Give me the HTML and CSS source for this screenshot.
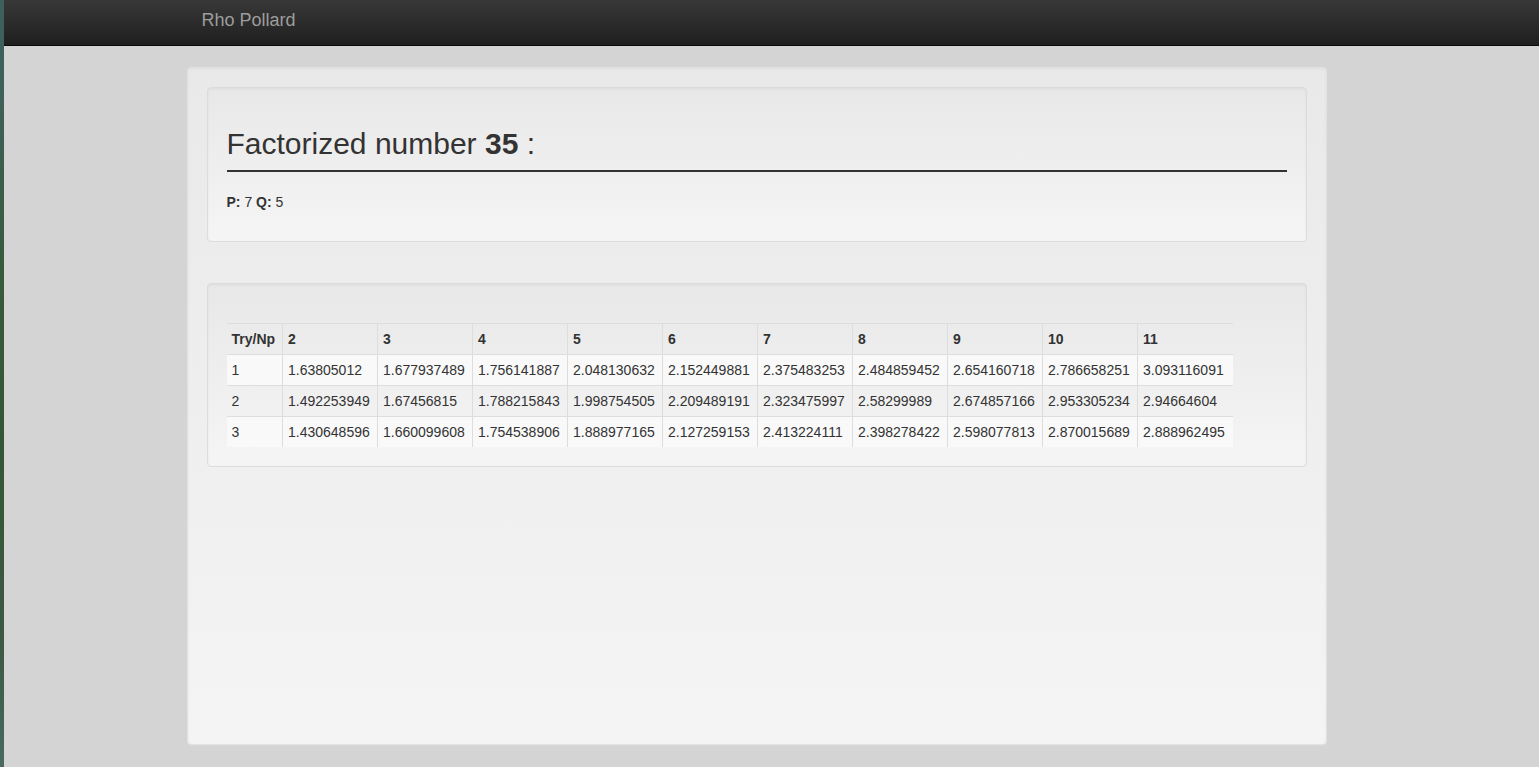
FILE: index.html
```html
<!DOCTYPE html>
<html>
<head>
<meta charset="utf-8">
<title>Rho Pollard</title>
<link rel="stylesheet" href="styles.css">
</head>
<body>
<div class="desk-strip"></div>
<div class="page">
  <nav class="navbar">
    <div class="container">
      <a class="brand" href="#">Rho Pollard</a>
    </div>
  </nav>
  <div class="container main-wrap">
    <div class="well outer">
      <div class="well result">
        <h2 class="title">Factorized number <b>35</b> :</h2>
        <div class="rule"></div>
        <p class="factors"><b>P:</b> 7 <b>Q:</b> 5</p>
      </div>
      <div class="well tries">
        <table class="grid">
          <colgroup>
            <col class="col-first">
            <col class="col-num"><col class="col-num"><col class="col-num"><col class="col-num"><col class="col-num">
            <col class="col-num"><col class="col-num"><col class="col-num"><col class="col-num"><col class="col-num">
          </colgroup>
          <thead>
            <tr><th>Try/Np</th><th>2</th><th>3</th><th>4</th><th>5</th><th>6</th><th>7</th><th>8</th><th>9</th><th>10</th><th>11</th></tr>
          </thead>
          <tbody>
            <tr><td>1</td><td>1.63805012</td><td>1.677937489</td><td>1.756141887</td><td>2.048130632</td><td>2.152449881</td><td>2.375483253</td><td>2.484859452</td><td>2.654160718</td><td>2.786658251</td><td>3.093116091</td></tr>
            <tr><td>2</td><td>1.492253949</td><td>1.67456815</td><td>1.788215843</td><td>1.998754505</td><td>2.209489191</td><td>2.323475997</td><td>2.58299989</td><td>2.674857166</td><td>2.953305234</td><td>2.94664604</td></tr>
            <tr><td>3</td><td>1.430648596</td><td>1.660099608</td><td>1.754538906</td><td>1.888977165</td><td>2.127259153</td><td>2.413224111</td><td>2.398278422</td><td>2.598077813</td><td>2.870015689</td><td>2.888962495</td></tr>
          </tbody>
        </table>
      </div>
    </div>
  </div>
</div>
</body>
</html>
```

FILE: styles.css
```css
* { box-sizing: border-box; }
html, body { margin: 0; padding: 0; height: 100%; }
body {
  display: flex;
  font-family: "Liberation Sans", Arial, Helvetica, sans-serif;
  font-size: 14px;
  line-height: 20px;
  color: #333;
  background: #d4d4d4;
  overflow: hidden;
}
.desk-strip {
  width: 4px;
  flex: 0 0 4px;
  background: linear-gradient(to bottom, #3f5f5c 0%, #40605a 12%, #3a5a3c 35%, #355636 60%, #3c5a44 85%, #4a6a62 100%);
}
.page { flex: 1; min-width: 0; }
.navbar {
  height: 46px;
  background: linear-gradient(to bottom, #383838 0%, #1f1f1f 100%);
  border-bottom: 1px solid #0a0a0a;
}
.container { width: 1170px; margin: 0 auto; }
.brand {
  display: inline-block;
  padding: 10px 15px;
  font-size: 18px;
  line-height: 20px;
  color: #9d9d9d;
  text-decoration: none;
}
.main-wrap { padding-top: 21px; }
.well {
  background: linear-gradient(to bottom, #e8e8e8 0%, #f5f5f5 100%);
  border: 1px solid #dcdcdc;
  border-radius: 4px;
  padding: 19px;
  box-shadow: inset 0 1px 3px rgba(0,0,0,.05), 0 1px 0 rgba(255,255,255,.1);
}
.outer {
  width: 1140px;
  min-height: 678px;
  border-color: #e2e2e2;
  background: linear-gradient(to bottom, #e9e9e9 0%, #f4f4f4 100%);
}
.result { margin-bottom: 41px; }
.title {
  margin: 20px 0 10px;
  font-size: 30px;
  line-height: 33px;
  font-weight: 400;
  color: #333;
}
.title b { font-weight: 700; }
.rule { border-top: 2px solid #333; }
.factors { margin: 20px 0 10px; }
.tries { padding-top: 39px; }
.grid {
  border-collapse: collapse;
  table-layout: fixed;
  width: 1006px;
  margin: 0;
}
.col-first { width: 56px; }
.col-num { width: 95px; }
.grid th, .grid td {
  padding: 5px;
  line-height: 20px;
  text-align: left;
  vertical-align: top;
  border-top: 1px solid #dddddd;
  border-left: 1px solid #dddddd;
  white-space: nowrap;
  overflow: hidden;
}
.grid th:first-child, .grid td:first-child { border-left: 0; }
.grid th { font-weight: 700; }
.grid tbody tr:nth-child(odd) td { background: #f9f9f9; }
```
